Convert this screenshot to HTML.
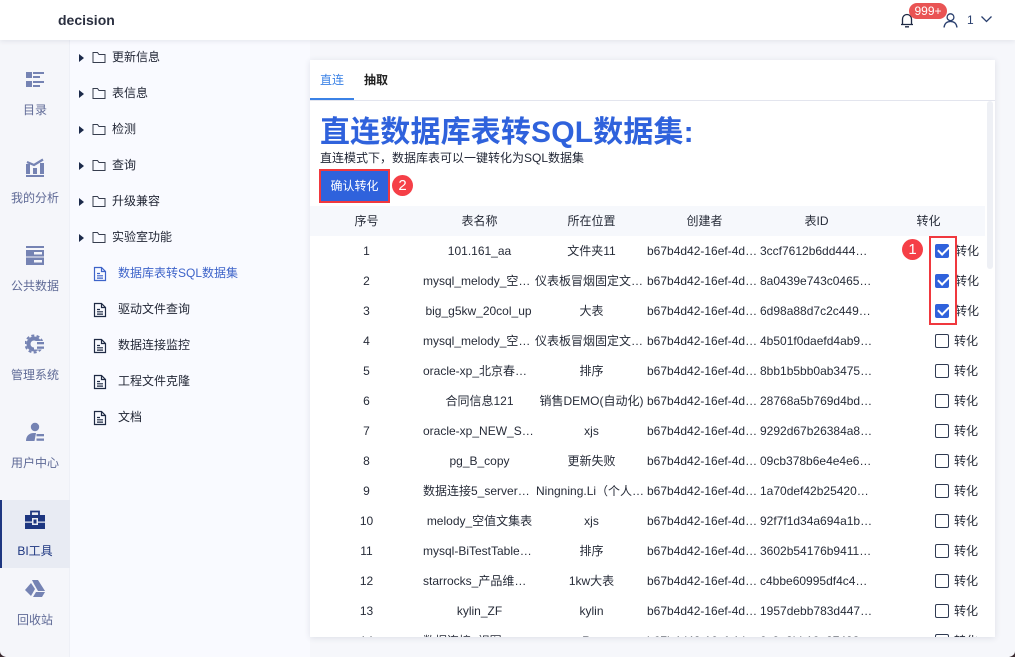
<!DOCTYPE html>
<html lang="zh"><head><meta charset="utf-8"><title>decision</title>
<style>
*{box-sizing:border-box}
html,body{margin:0;padding:0}
body{width:1015px;height:657px;overflow:hidden;position:relative;background:#f6f7fb;font-family:"Liberation Sans","Noto Sans CJK SC",sans-serif;font-size:12px;color:#262b38}
.a{position:absolute;white-space:nowrap}
#top{left:0;top:0;width:1015px;height:40px;background:#fff;box-shadow:0 1px 5px rgba(40,50,80,.1);z-index:5}
#side{left:0;top:40px;width:70px;height:617px;background:#f5f6fa;border-right:1px solid #eef0f6}
.nl{left:0;width:70px;text-align:center;color:#5f6a96;font-size:12px;line-height:16px}
#tree{left:70px;top:40px;width:240px;height:617px;background:#f9faff}
.t{font-size:12px;line-height:16px;color:#1f2433}
.tri{width:0;height:0;border-left:5px solid #1c2a4a;border-top:4px solid transparent;border-bottom:4px solid transparent;left:79px}
#panel{left:310px;top:60px;width:685px;height:577px;background:#fff;box-shadow:0 1px 6px rgba(40,50,80,.12);overflow:hidden}
.c{position:absolute;height:30px;line-height:30px;width:113px;text-align:center;overflow:hidden;white-space:nowrap;color:#262b38}
.l{text-align:left}
.cb{position:absolute;left:625px;width:14px;height:14px;border:1px solid #2f3a52;border-radius:2px;background:#fff}
.cb.on{background:#2f62dc;border-color:#2f62dc}
.cb.on:after{content:"";position:absolute;left:2px;top:1px;width:9px;height:5px;border-left:2px solid #fff;border-bottom:2px solid #fff;transform:rotate(-45deg)}
.lb{position:absolute;left:644px;line-height:30px;color:#262b38}
.lb.k{left:645px}
</style></head><body>

<div class="a" id="top">
<div class="a" style="left:58px;top:11px;font-size:14px;line-height:18px;font-weight:bold;color:#2b3040">decision</div>
<svg class="a" style="left:898px;top:11px" width="18" height="18" viewBox="0 0 18 18" fill="none" stroke="#1f2a44" stroke-width="1.3"><path d="M3 13.5h12M4.5 13.5V8a4.5 4.5 0 0 1 9 0v5.5M7 15.800h4"/></svg>
<div class="a" style="left:909px;top:3px;width:38px;height:16px;border-radius:8px;background:#e95454;color:#fff;font-size:12px;line-height:16px;text-align:center">999+</div>
<svg class="a" style="left:942px;top:12px" width="17" height="17" viewBox="0 0 17 17" fill="none" stroke="#2a3f6e" stroke-width="1.3"><circle cx="8.5" cy="5.2" r="3.4"/><path d="M2 15.5c.5-4 3-6 6.500-6s6 2 6.500 6"/></svg>
<div class="a" style="left:967px;top:12px;font-size:12px;line-height:16px;color:#2a3f6e">1</div>
<svg class="a" style="left:980px;top:15px" width="13" height="9" viewBox="0 0 13 9" fill="none" stroke="#2a3f6e" stroke-width="1.3"><path d="M1.500 1.500 6.500 6.500 11.500 1.500"/></svg>
</div>

<div class="a" id="side"></div>
<svg class="a" style="left:25px;top:71px" width="20" height="18" viewBox="0 0 20 18" fill="#7583b3"><rect x="1" y="1" width="6" height="6"/><rect x="1" y="10" width="6" height="6"/><rect x="8" y="1" width="11" height="2"/><rect x="8" y="5" width="7" height="2"/><rect x="8" y="10" width="11" height="2"/><rect x="8" y="14" width="7" height="2"/></svg>
<div class="a nl" style="top:102px">目录</div>
<svg class="a" style="left:25px;top:158px" width="20" height="20" viewBox="0 0 20 20" fill="#7583b3"><rect x="1" y="6" width="4" height="10"/><rect x="8" y="10" width="4" height="6"/><rect x="15" y="5" width="4" height="11"/><rect x="1" y="17" width="18" height="2"/><path d="M2 4 9 7 18 1.500" fill="none" stroke="#7583b3" stroke-width="2.300"/></svg>
<div class="a nl" style="top:190px">我的分析</div>
<svg class="a" style="left:25px;top:246px" width="20" height="20" viewBox="0 0 20 20" fill="#7583b3"><rect x="1" y="0" width="18" height="2"/><path d="M1 4h18v6.500H1zM1 11.500h18V19H1z"/><rect x="9" y="6" width="8" height="2.500" fill="#f5f6fa"/><rect x="9" y="14" width="8" height="2.500" fill="#f5f6fa"/></svg>
<div class="a nl" style="top:278px">公共数据</div>
<svg class="a" style="left:25px;top:334px" width="20" height="20" viewBox="0 0 20 20"><circle cx="9" cy="10" r="5.500" fill="none" stroke="#7583b3" stroke-width="4"/><circle cx="9" cy="10" r="8.500" fill="none" stroke="#7583b3" stroke-width="2" stroke-dasharray="3 2.300"/><rect x="9" y="7" width="11" height="8.500" fill="#f5f6fa"/><rect x="12" y="8" width="7" height="2.300" fill="#7583b3"/><rect x="12" y="12.500" width="7" height="2.300" fill="#7583b3"/></svg>
<div class="a nl" style="top:367px">管理系统</div>
<svg class="a" style="left:25px;top:422px" width="20" height="20" viewBox="0 0 20 20" fill="#7583b3"><circle cx="10" cy="5" r="4.200"/><path d="M1 19c0-5 3-8 8-8h2l-1.500 8z"/><rect x="11.500" y="12" width="7.500" height="2.300"/><rect x="11.500" y="16.500" width="7.500" height="2.300"/></svg>
<div class="a nl" style="top:455px">用户中心</div>
<div class="a" style="left:0;top:500px;width:70px;height:68px;background:#e8ebf3;border-left:2px solid #1d3680"></div>
<svg class="a" style="left:25px;top:510px" width="20" height="20" viewBox="0 0 20 20"><path d="M6 5V1.500h8V5" fill="none" stroke="#1d3680" stroke-width="1.800"/><path d="M0 5h20v6.500H0zM0 12.800h20V19H0z" fill="#1d3680"/><rect x="7" y="8" width="6" height="7" fill="#e8ebf3"/><rect x="8.500" y="9.500" width="3" height="4" fill="#1d3680"/></svg>
<div class="a nl" style="top:543px;color:#1d3680">BI工具</div>
<svg class="a" style="left:25px;top:579px" width="20" height="19" viewBox="0 0 20 19" fill="#7583b3"><path d="M7 1h6l7 11h-7L9 5z"/><path d="M6 4l4 6-4 7-6-6z"/><path d="M8 18l3-5h9l-3 5z"/></svg>
<div class="a nl" style="top:612px">回收站</div>

<div class="a" id="tree"></div>
<div class="a tri" style="top:54px"></div><div class="a tri" style="top:90px"></div><div class="a tri" style="top:126px"></div><div class="a tri" style="top:162px"></div><div class="a tri" style="top:198px"></div><div class="a tri" style="top:234px"></div>
<svg class="a" style="left:92px;top:51px" width="14" height="13" viewBox="0 0 14 13" fill="none" stroke="#363d4e"><path d="M1 11.500V1.500h4.500L7 3.500h6v8z"/></svg>
<svg class="a" style="left:92px;top:87px" width="14" height="13" viewBox="0 0 14 13" fill="none" stroke="#363d4e"><path d="M1 11.500V1.500h4.500L7 3.500h6v8z"/></svg>
<svg class="a" style="left:92px;top:123px" width="14" height="13" viewBox="0 0 14 13" fill="none" stroke="#363d4e"><path d="M1 11.500V1.500h4.500L7 3.500h6v8z"/></svg>
<svg class="a" style="left:92px;top:159px" width="14" height="13" viewBox="0 0 14 13" fill="none" stroke="#363d4e"><path d="M1 11.500V1.500h4.500L7 3.500h6v8z"/></svg>
<svg class="a" style="left:92px;top:195px" width="14" height="13" viewBox="0 0 14 13" fill="none" stroke="#363d4e"><path d="M1 11.500V1.500h4.500L7 3.500h6v8z"/></svg>
<svg class="a" style="left:92px;top:231px" width="14" height="13" viewBox="0 0 14 13" fill="none" stroke="#363d4e"><path d="M1 11.500V1.500h4.500L7 3.500h6v8z"/></svg>
<div class="a t" style="left:112px;top:49px">更新信息</div>
<div class="a t" style="left:112px;top:85px">表信息</div>
<div class="a t" style="left:112px;top:121px">检测</div>
<div class="a t" style="left:112px;top:157px">查询</div>
<div class="a t" style="left:112px;top:193px">升级兼容</div>
<div class="a t" style="left:112px;top:229px">实验室功能</div>
<svg class="a" style="left:93px;top:266px" width="14" height="16" viewBox="0 0 14 16" fill="none" stroke="#3d63c9" stroke-width="1.200"><path d="M1.500 1.500h7l4 4v9h-11zM8.500 1.500v4h4M4 7.500h3M4 9.800h6M4 12.100h6"/></svg>
<svg class="a" style="left:93px;top:302px" width="14" height="16" viewBox="0 0 14 16" fill="none" stroke="#1f2a44" stroke-width="1.200"><path d="M1.500 1.500h7l4 4v9h-11zM8.500 1.500v4h4M4 7.500h3M4 9.800h6M4 12.100h6"/></svg>
<svg class="a" style="left:93px;top:338px" width="14" height="16" viewBox="0 0 14 16" fill="none" stroke="#1f2a44" stroke-width="1.200"><path d="M1.500 1.500h7l4 4v9h-11zM8.500 1.500v4h4M4 7.500h3M4 9.800h6M4 12.100h6"/></svg>
<svg class="a" style="left:93px;top:374px" width="14" height="16" viewBox="0 0 14 16" fill="none" stroke="#1f2a44" stroke-width="1.200"><path d="M1.500 1.500h7l4 4v9h-11zM8.500 1.500v4h4M4 7.500h3M4 9.800h6M4 12.100h6"/></svg>
<svg class="a" style="left:93px;top:410px" width="14" height="16" viewBox="0 0 14 16" fill="none" stroke="#1f2a44" stroke-width="1.200"><path d="M1.500 1.500h7l4 4v9h-11zM8.500 1.500v4h4M4 7.500h3M4 9.800h6M4 12.100h6"/></svg>
<div class="a t" style="left:118px;top:265px;color:#3d63c9">数据库表转SQL数据集</div>
<div class="a t" style="left:118px;top:301px">驱动文件查询</div>
<div class="a t" style="left:118px;top:337px">数据连接监控</div>
<div class="a t" style="left:118px;top:373px">工程文件克隆</div>
<div class="a t" style="left:118px;top:409px">文档</div>

<div class="a" id="panel">
<div class="a" style="left:10px;top:12px;font-size:12px;line-height:16px;color:#3b82e6">直连</div>
<div class="a" style="left:54px;top:12px;font-size:12px;line-height:16px;font-weight:bold;color:#222">抽取</div>
<div class="a" style="left:0;top:40px;width:685px;height:1px;background:#e3e5ee"></div>
<div class="a" style="left:0;top:38px;width:44px;height:2px;background:#3b82e6"></div>
<div class="a" style="left:10px;top:53px;font-size:30px;line-height:40px;font-weight:bold;letter-spacing:.15px;color:#2f62dc">直连数据库表转SQL数据集:</div>
<div class="a" style="left:10px;top:90px;font-size:12px;line-height:16px;color:#1f2433">直连模式下，数据库表可以一键转化为SQL数据集</div>
<div class="a" style="left:9px;top:109px;width:71px;height:34px;background:#2f62dc;border:2px solid #f0383e;color:#fff;font-size:12px;line-height:30px;text-align:center">确认转化</div>
<div class="a" style="left:82px;top:115px;width:21px;height:21px;border-radius:50%;background:#f53f47;color:#fff;font-size:15px;line-height:21px;text-align:center">2</div>
<div class="a" style="left:0;top:146px;width:675px;height:30px;background:#f6f8fc"></div>
<div class="a" style="left:677px;top:41px;width:6px;height:168px;background:#eef0f5;border-radius:3px"></div>

<div class="c" style="left:0;top:146px">序号</div><div class="c" style="left:113px;top:146px">表名称</div><div class="c" style="left:225px;top:146px">所在位置</div><div class="c" style="left:338px;top:146px">创建者</div><div class="c" style="left:450px;top:146px">表ID</div><div class="c" style="left:562px;top:146px">转化</div>

<div class="c" style="left:0;top:176px">1</div><div class="c" style="left:113px;top:176px">101.161_aa</div><div class="c" style="left:225px;top:176px">文件夹11</div><div class="c l" style="left:337px;top:176px">b67b4d42-16ef-4d…</div><div class="c l" style="left:450px;top:176px">3ccf7612b6dd444…</div><div class="cb on" style="top:184px"></div><div class="lb k" style="top:176px">转化</div>
<div class="c" style="left:0;top:206px">2</div><div class="c l" style="left:113px;top:206px">mysql_melody_空…</div><div class="c l" style="left:225px;top:206px">仪表板冒烟固定文…</div><div class="c l" style="left:337px;top:206px">b67b4d42-16ef-4d…</div><div class="c l" style="left:450px;top:206px">8a0439e743c0465…</div><div class="cb on" style="top:214px"></div><div class="lb k" style="top:206px">转化</div>
<div class="c" style="left:0;top:236px">3</div><div class="c" style="left:112px;top:236px">big_g5kw_20col_up</div><div class="c" style="left:225px;top:236px">大表</div><div class="c l" style="left:337px;top:236px">b67b4d42-16ef-4d…</div><div class="c l" style="left:450px;top:236px">6d98a88d7c2c449…</div><div class="cb on" style="top:244px"></div><div class="lb k" style="top:236px">转化</div>
<div class="c" style="left:0;top:266px">4</div><div class="c l" style="left:113px;top:266px">mysql_melody_空…</div><div class="c l" style="left:225px;top:266px">仪表板冒烟固定文…</div><div class="c l" style="left:337px;top:266px">b67b4d42-16ef-4d…</div><div class="c l" style="left:450px;top:266px">4b501f0daefd4ab9…</div><div class="cb" style="top:274px"></div><div class="lb" style="top:266px">转化</div>
<div class="c" style="left:0;top:296px">5</div><div class="c l" style="left:113px;top:296px">oracle-xp_北京春…</div><div class="c" style="left:225px;top:296px">排序</div><div class="c l" style="left:337px;top:296px">b67b4d42-16ef-4d…</div><div class="c l" style="left:450px;top:296px">8bb1b5bb0ab3475…</div><div class="cb" style="top:304px"></div><div class="lb" style="top:296px">转化</div>
<div class="c" style="left:0;top:326px">6</div><div class="c" style="left:113px;top:326px">合同信息121</div><div class="c" style="left:225px;top:326px">销售DEMO(自动化)</div><div class="c l" style="left:337px;top:326px">b67b4d42-16ef-4d…</div><div class="c l" style="left:450px;top:326px">28768a5b769d4bd…</div><div class="cb" style="top:334px"></div><div class="lb" style="top:326px">转化</div>
<div class="c" style="left:0;top:356px">7</div><div class="c l" style="left:113px;top:356px">oracle-xp_NEW_S…</div><div class="c" style="left:225px;top:356px">xjs</div><div class="c l" style="left:337px;top:356px">b67b4d42-16ef-4d…</div><div class="c l" style="left:450px;top:356px">9292d67b26384a8…</div><div class="cb" style="top:364px"></div><div class="lb" style="top:356px">转化</div>
<div class="c" style="left:0;top:386px">8</div><div class="c" style="left:113px;top:386px">pg_B_copy</div><div class="c" style="left:225px;top:386px">更新失败</div><div class="c l" style="left:337px;top:386px">b67b4d42-16ef-4d…</div><div class="c l" style="left:450px;top:386px">09cb378b6e4e4e6…</div><div class="cb" style="top:394px"></div><div class="lb" style="top:386px">转化</div>
<div class="c" style="left:0;top:416px">9</div><div class="c l" style="left:113px;top:416px">数据连接5_server…</div><div class="c l" style="left:226px;top:416px">Ningning.Li（个人…</div><div class="c l" style="left:337px;top:416px">b67b4d42-16ef-4d…</div><div class="c l" style="left:450px;top:416px">1a70def42b25420…</div><div class="cb" style="top:424px"></div><div class="lb" style="top:416px">转化</div>
<div class="c" style="left:0;top:446px">10</div><div class="c" style="left:113px;top:446px">melody_空值文集表</div><div class="c" style="left:225px;top:446px">xjs</div><div class="c l" style="left:337px;top:446px">b67b4d42-16ef-4d…</div><div class="c l" style="left:450px;top:446px">92f7f1d34a694a1b…</div><div class="cb" style="top:454px"></div><div class="lb" style="top:446px">转化</div>
<div class="c" style="left:0;top:476px">11</div><div class="c l" style="left:113px;top:476px">mysql-BiTestTable…</div><div class="c" style="left:225px;top:476px">排序</div><div class="c l" style="left:337px;top:476px">b67b4d42-16ef-4d…</div><div class="c l" style="left:450px;top:476px">3602b54176b9411…</div><div class="cb" style="top:484px"></div><div class="lb" style="top:476px">转化</div>
<div class="c" style="left:0;top:506px">12</div><div class="c l" style="left:113px;top:506px">starrocks_产品维…</div><div class="c" style="left:225px;top:506px">1kw大表</div><div class="c l" style="left:337px;top:506px">b67b4d42-16ef-4d…</div><div class="c l" style="left:450px;top:506px">c4bbe60995df4c4…</div><div class="cb" style="top:514px"></div><div class="lb" style="top:506px">转化</div>
<div class="c" style="left:0;top:536px">13</div><div class="c" style="left:113px;top:536px">kylin_ZF</div><div class="c" style="left:225px;top:536px">kylin</div><div class="c l" style="left:337px;top:536px">b67b4d42-16ef-4d…</div><div class="c l" style="left:450px;top:536px">1957debb783d447…</div><div class="cb" style="top:544px"></div><div class="lb" style="top:536px">转化</div>
<div class="c" style="left:0;top:566px">14</div><div class="c l" style="left:113px;top:566px">数据连接_视图…</div><div class="c" style="left:225px;top:566px">Rpt</div><div class="c l" style="left:337px;top:566px">b67b4d42-16ef-4d…</div><div class="c l" style="left:450px;top:566px">0c9e2bb10e87493…</div><div class="cb" style="top:574px"></div><div class="lb" style="top:566px">转化</div>

<div class="a" style="left:592px;top:179px;width:21px;height:21px;border-radius:50%;background:#f53f47;color:#fff;font-size:15px;line-height:21px;text-align:center">1</div>
<div class="a" style="left:619px;top:176px;width:28px;height:89px;border:2px solid #f0383e"></div>
</div>

<svg class="a" style="left:0;top:651px" width="6" height="6" viewBox="0 0 6 6"><path d="M0 0C0 3 2 5 6 6H0z" fill="#3a2a30"/></svg>
<svg class="a" style="left:1009px;top:651px" width="6" height="6" viewBox="0 0 6 6"><path d="M6 0C6 3 4 5 0 6H6z" fill="#3a2a30"/></svg>
</body></html>
